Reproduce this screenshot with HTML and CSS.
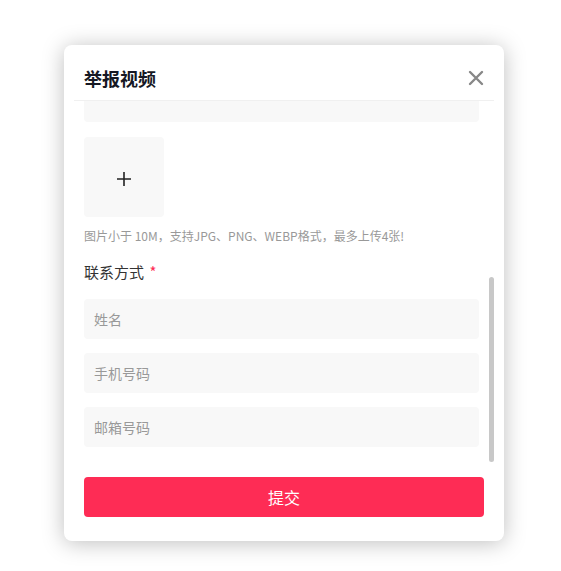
FILE: index.html
```html
<!DOCTYPE html>
<html lang="zh-CN">
<head>
    <meta charset="UTF-8">
    <meta name="viewport" content="width=device-width,initial-scale=1.0">
    <title>举报视频</title>
    <link rel="stylesheet" href="styles.css">
</head>
<body>
<div class="dialog">
    <div class="header">
        <span class="title">举报视频</span>
        <button class="close" aria-label="关闭">
            <svg width="16" height="16" viewBox="0 0 16 16"><path d="M2 2L14 14M14 2L2 14" stroke="#888" stroke-width="2.4" stroke-linecap="round"/></svg>
        </button>
    </div>
    <div class="scroll-wrap">
        <div class="body" id="body">
            <div class="label top">举报理由 <span class="req">*</span></div>
            <div class="reasons">
                <label class="reason"><input type="radio" name="r"> 色情低俗</label>
                <label class="reason"><input type="radio" name="r"> 政治敏感</label>
                <label class="reason"><input type="radio" name="r"> 违法犯罪</label>
                <label class="reason"><input type="radio" name="r"> 垃圾广告、售卖假货</label>
                <label class="reason"><input type="radio" name="r"> 造谣传谣、涉嫌欺诈</label>
                <label class="reason"><input type="radio" name="r"> 侮辱谩骂</label>
                <label class="reason"><input type="radio" name="r"> 危险行为</label>
                <label class="reason"><input type="radio" name="r"> 未成年不当行为</label>
                <label class="reason"><input type="radio" name="r"> 引人不适</label>
                <label class="reason"><input type="radio" name="r"> 诱导点赞、分享、关注</label>
                <label class="reason"><input type="radio" name="r"> 侵犯权益</label>
                <label class="reason"><input type="radio" name="r"> 其他</label>
            </div>
            <div class="label">举报描述 <span class="req">*</span></div>
            <textarea class="desc" aria-label="举报描述"></textarea>
            <div class="upload">
                <svg width="16" height="16" viewBox="0 0 16 16"><path d="M1 8H15M8 1V15" stroke="#222" stroke-width="1.6"/></svg>
            </div>
            <div class="hint">图片小于 10M，支持JPG、PNG、WEBP格式，最多上传4张!</div>
            <div class="label">联系方式 <span class="req">*</span></div>
            <label class="field">
                <input type="text" oninput="toggleph(this)">
                <span class="ph">姓名</span>
            </label>
            <label class="field">
                <input type="text" oninput="toggleph(this)">
                <span class="ph">手机号码</span>
            </label>
            <label class="field">
                <input type="text" oninput="toggleph(this)">
                <span class="ph">邮箱号码</span>
            </label>
        </div>
        <!-- scrollbars are hidden in the screenshot, so draw the thumb -->
        <div class="thumb"></div>
    </div>
    <div class="footer">
        <button class="submit">提交</button>
    </div>
</div>
<script>
    document.getElementById('body').scrollTop = 9999;
    function toggleph(input){
        input.nextElementSibling.style.display = input.value ? 'none' : '';
    }
</script>
</body>
</html>
```

FILE: styles.css
```css
* {
    box-sizing: border-box;
}

html, body {
    background: #fff;
}

body {
    margin: 0;
    min-height: 571px;
    padding: 45px 0 30px 64px;
    font-family: "Noto Sans CJK SC", "Noto Sans", sans-serif;
    color: #333;
}

.dialog {
    width: 440px;
    background: #fff;
    border-radius: 8px;
    box-shadow: 0 2px 22px rgba(0, 0, 0, 0.26);
    padding-bottom: 24px;
}

.header {
    height: 56px;
    margin: 0 10px;
    padding: 11px 10px 0;
    display: flex;
    align-items: center;
    justify-content: space-between;
    border-bottom: 1px solid #f0f0f0;
}

.title {
    font-size: 18px;
    font-weight: bold;
    color: #161823;
}

.close {
    border: none;
    background: none;
    padding: 0;
    width: 16px;
    height: 16px;
    cursor: pointer;
}

.close svg {
    display: block;
}

.scroll-wrap {
    position: relative;
    margin: 0 10px;
}

.body {
    height: 361px;
    padding: 16px 15px 15px 10px;
    overflow-y: auto;
    scrollbar-width: none;
}

.body::-webkit-scrollbar {
    display: none;
}

.thumb {
    position: absolute;
    right: 0;
    top: 176px;
    width: 5px;
    height: 185px;
    border-radius: 3px;
    background: #c8c8c8;
}

.label {
    margin-top: 17px;
    font-size: 15px;
    line-height: 20px;
    color: #333;
}

.label.top {
    margin-top: 0;
}

.req {
    color: #fe2c55;
    margin-left: 2px;
}

.reasons {
    margin-top: 12px;
    display: grid;
    grid-template-columns: 1fr 1fr;
}

.reason {
    height: 30px;
    font-size: 14px;
    color: #333;
    display: flex;
    align-items: center;
    gap: 6px;
}

.desc {
    display: block;
    width: 100%;
    height: 91px;
    margin-top: 12px;
    border: none;
    border-radius: 4px;
    background: #f8f8f8;
    resize: none;
    padding: 10px;
    font: inherit;
    font-size: 14px;
}

.upload {
    width: 80px;
    height: 80px;
    margin-top: 15px;
    border-radius: 4px;
    background: #f8f8f8;
    display: flex;
    align-items: center;
    justify-content: center;
}

.upload svg {
    margin-top: 4px;
}

.hint {
    margin-top: 10px;
    font-size: 12px;
    line-height: 18px;
    color: #999;
}

.field {
    position: relative;
    display: block;
    height: 40px;
    margin-top: 14px;
    border-radius: 4px;
    background: #f8f8f8;
}

.label + .field {
    margin-top: 17px;
}

.field input {
    display: block;
    width: 100%;
    height: 100%;
    border: none;
    outline: none;
    background: transparent;
    padding: 0 10px;
    font: inherit;
    font-size: 14px;
    color: #333;
}

.ph {
    position: absolute;
    left: 10px;
    top: 0;
    line-height: 40px;
    font-size: 14px;
    color: #999;
    pointer-events: none;
}

.footer {
    padding: 15px 20px 0;
}

.submit {
    display: block;
    width: 100%;
    height: 40px;
    border: none;
    border-radius: 4px;
    background: #fe2c55;
    color: #fff;
    font: inherit;
    font-size: 16px;
    cursor: pointer;
}
```
